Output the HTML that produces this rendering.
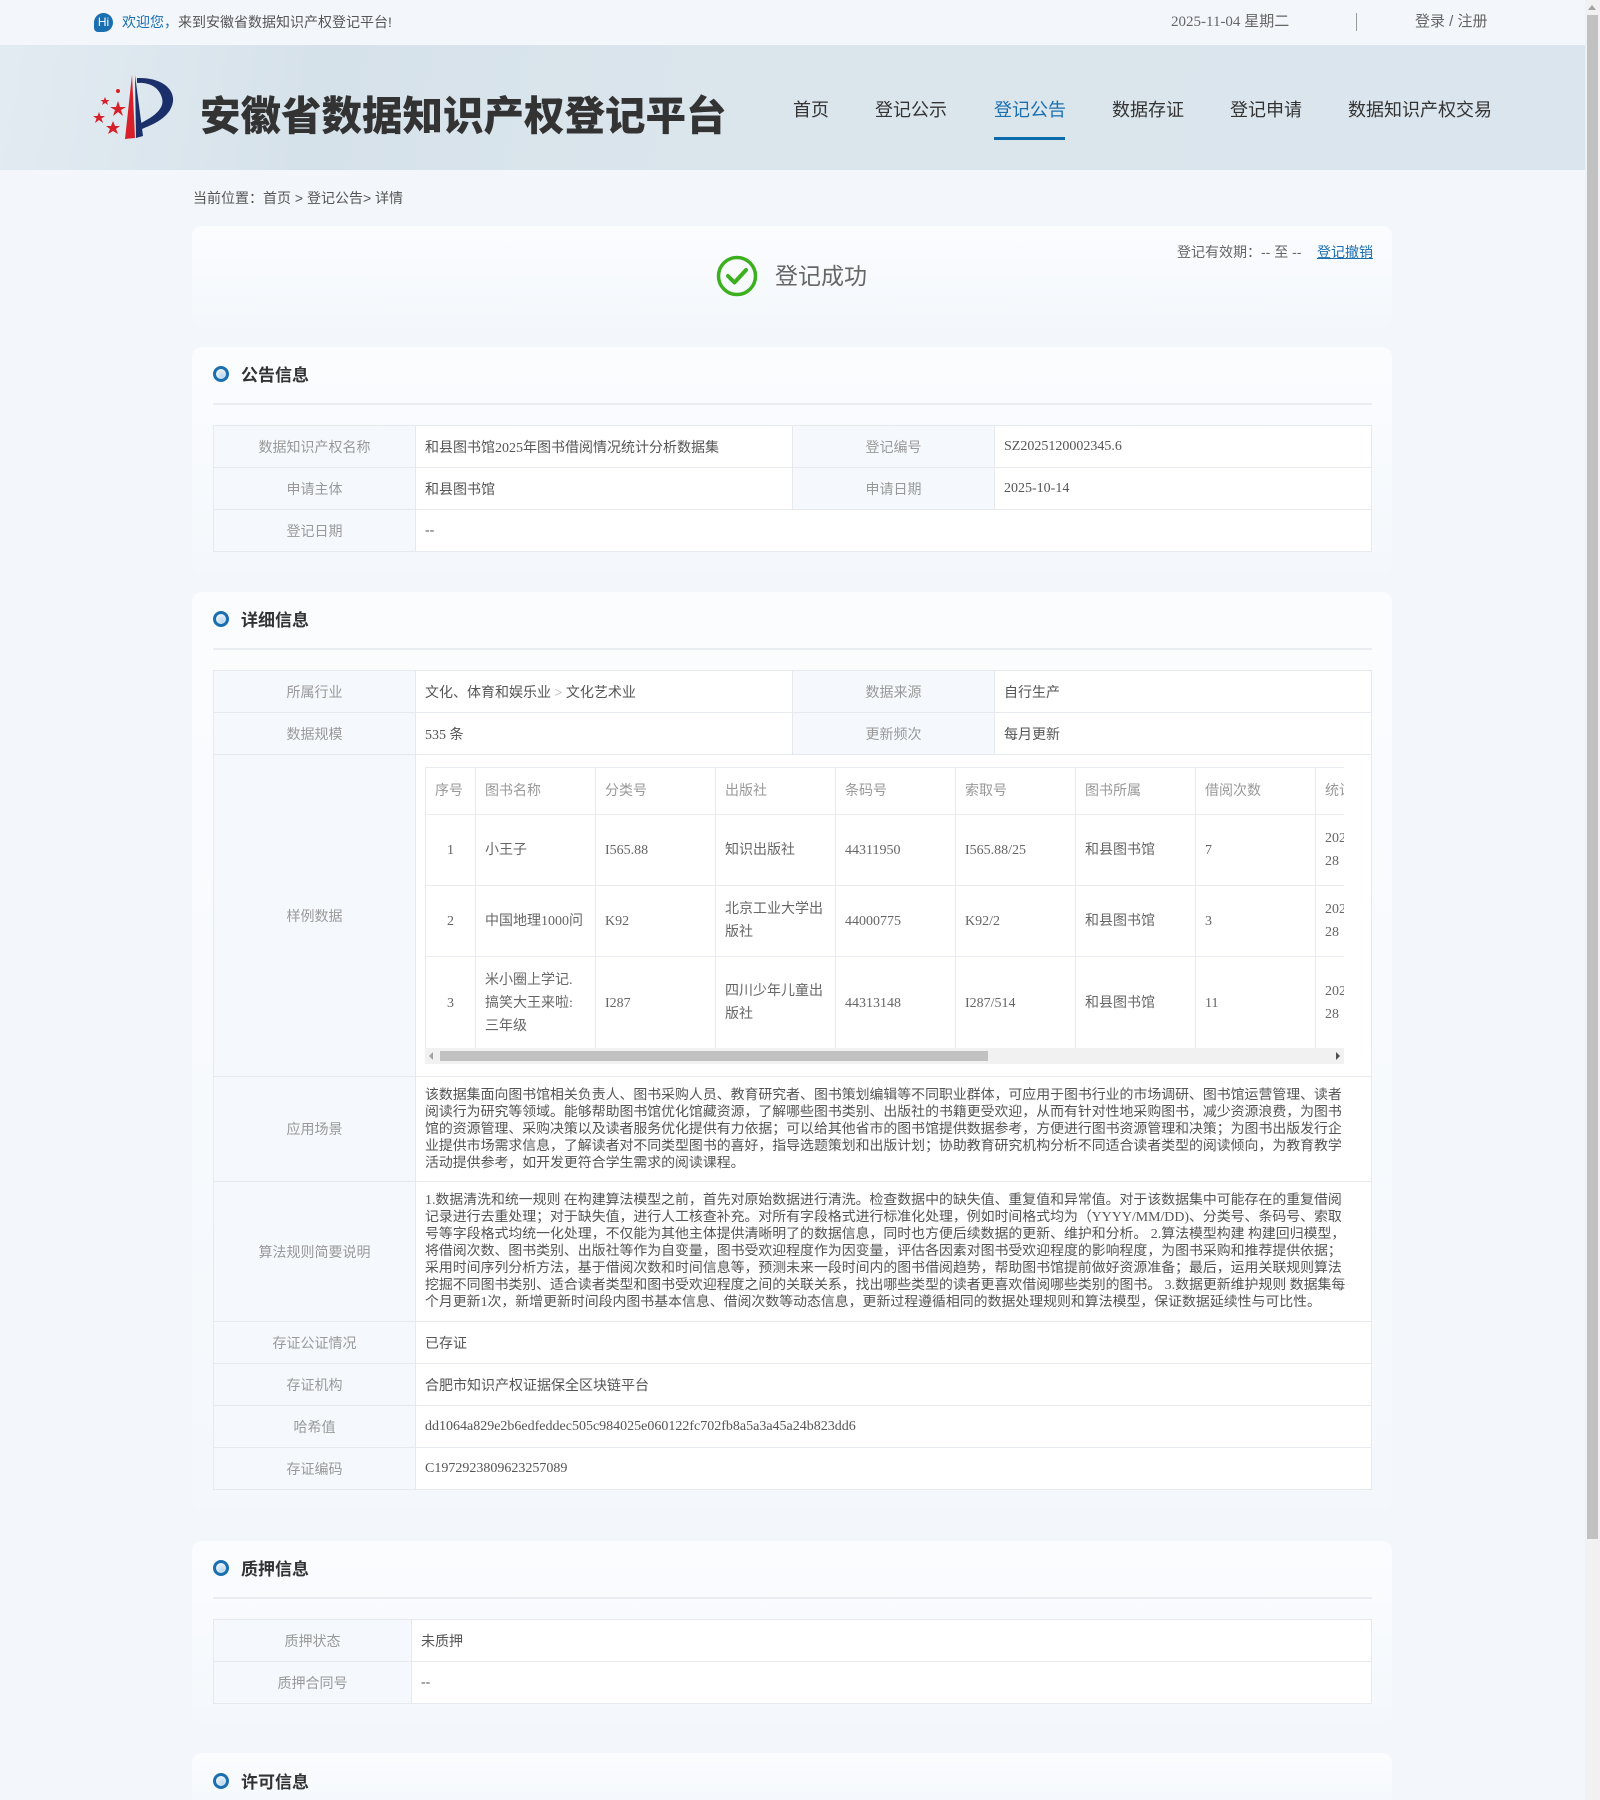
<!DOCTYPE html>
<html><head><meta charset="utf-8">
<style>
*{margin:0;padding:0;box-sizing:border-box}
html,body{width:1600px;height:1800px;overflow:hidden}
body{background:#f3f6fb;font-family:"Liberation Serif","Noto Sans CJK SC",serif;color:#555;position:relative}
.sans{font-family:"Liberation Sans","Noto Sans CJK SC",sans-serif}
.abs{position:absolute}
#top{left:0;top:0;width:1585px;height:45px;background:#f3f6fb}
#banner{left:0;top:45px;width:1585px;height:125px;background:linear-gradient(100deg,#e3ebf2 0%,#d6e2ea 20%,#dbe5ec 45%,#dae5ed 100%)}
.nav{top:97px;font-size:18px;color:#333;font-family:"Noto Sans CJK SC",sans-serif;line-height:24px;white-space:nowrap}
.card{position:absolute;left:192px;width:1200px;border-radius:10px;background:linear-gradient(180deg,#fbfcfe,#f4f8fc)}
.sec{position:absolute;left:21px;font-size:17px;font-weight:bold;color:#333;font-family:"Noto Sans CJK SC",sans-serif;line-height:22px;padding-left:28px}
.ic{position:absolute;left:0;top:3px;width:16px;height:16px;border-radius:50%;border:3px solid #1a6fb0;background:radial-gradient(circle at 65% 70%,#bcd6ee,#fff)}
.div{position:absolute;left:21px;width:1159px;height:2px;background:#e9edf2}
table{border-collapse:collapse;position:absolute;left:21px;width:1159px;table-layout:fixed}
td{border:1px solid #e6eaef;font-size:14px;height:42px;color:#555;padding:0 9px;font-family:"Liberation Serif","Noto Sans CJK SC",serif}
td.l{background:#f5f9fd;color:#999;text-align:center}
td.v{background:#fff}
.p{line-height:17px;padding:8px 22px 8px 9px;font-size:13.9px}
.st{border-collapse:collapse;table-layout:fixed;position:static;width:1050px}
.st td{height:auto;border:1px solid #e8ecf0;color:#666;font-size:14px;padding:0 9px;line-height:23px}
.st tr.h td{height:47px;color:#999}
</style></head><body>
<div id="top" class="abs"></div>
<div class="abs" style="left:94px;top:13px;width:19px;height:19px;border-radius:50% 50% 50% 4px;background:#1a6fb0;color:#fff;font:12px 'Liberation Sans',sans-serif;line-height:19px;text-align:center">Hi</div>
<div class="abs sans" style="left:122px;top:13px;font-size:14px;line-height:19px;color:#555"><span style="color:#1a6fb0">欢迎您，</span>来到安徽省数据知识产权登记平台!</div>
<div class="abs" style="left:1171px;top:12px;font-size:15px;line-height:20px;color:#666">2025-11-04 <span class="sans">星期二</span></div>
<div class="abs" style="left:1356px;top:13px;width:1px;height:18px;background:#999"></div>
<div class="abs sans" style="left:1415px;top:12px;font-size:15px;line-height:20px;color:#666">登录 / 注册</div>

<div id="banner" class="abs"></div>
<svg class="abs" style="left:85px;top:65px" width="110" height="90" viewBox="0 0 110 90">
<polygon points="47,10 40,74 50,73" fill="#d8202a"/>
<polygon points="50,10 51,73 58,71" fill="#1b2f6b"/>
<path d="M52,13 C80,12 95,28 85,45 C78,56 66,60 57,64 L56,58 C68,52 80,44 77,33 C74,22 64,17 52,18 Z" fill="#1b2f6b"/>
<g fill="#d8202a">
<polygon points="33,36 35,42 41,42 36,45 38,51 33,47 28,51 30,45 25,42 31,42"/>
<polygon points="14,47 15.5,51 20,51 16.5,53.5 18,58 14,55 10,58 11.5,53.5 8,51 12.5,51"/>
<polygon points="20,32 21.3,35 24.5,35 22,37 23,40 20,38 17,40 18,37 15.5,35 18.7,35"/>
<polygon points="28,56 30,61 35,61 31,64 33,69 28,66 23,69 25,64 21,61 26,61"/>
<circle cx="33" cy="26" r="2"/>
</g></svg>
<div class="abs" style="left:200px;top:88px;font-size:40.5px;line-height:50px;font-weight:900;color:#333;font-family:'Noto Sans CJK SC',sans-serif;white-space:nowrap">安徽省数据知识产权登记平台</div>
<div class="abs nav" style="left:793px">首页</div>
<div class="abs nav" style="left:875px">登记公示</div>
<div class="abs nav" style="left:994px;color:#1a6fb0">登记公告</div>
<div class="abs" style="left:994px;top:137px;width:71px;height:3px;background:#0a6aaa"></div>
<div class="abs nav" style="left:1112px">数据存证</div>
<div class="abs nav" style="left:1230px">登记申请</div>
<div class="abs nav" style="left:1348px">数据知识产权交易</div>

<div class="abs sans" style="left:193px;top:188px;font-size:14px;line-height:20px;color:#555">当前位置：首页 &gt; 登记公告&gt; 详情</div>

<div class="card" style="top:226px;height:101px">
  <svg class="abs" style="left:524px;top:29px" width="42" height="42" viewBox="0 0 42 42"><circle cx="21" cy="21" r="18.5" fill="none" stroke="#3cb01f" stroke-width="3.5"/><path d="M12 21 L18.5 27.5 L30 15" fill="none" stroke="#3cb01f" stroke-width="4" stroke-linecap="round" stroke-linejoin="round"/></svg>
  <div class="abs sans" style="left:583px;top:35px;font-size:23px;line-height:30px;color:#666">登记成功</div>
  <div class="abs sans" style="left:985px;top:16px;font-size:14px;line-height:20px;color:#666">登记有效期：-- 至 --</div>
  <div class="abs sans" style="left:1125px;top:16px;font-size:14px;line-height:20px;color:#1a6fb0;text-decoration:underline">登记撤销</div>
</div>

<div class="card" style="top:347px;height:227px">
  <div class="sec" style="top:16px"><span class="ic"></span>公告信息</div>
  <div class="div" style="top:56px"></div>
  <table style="top:78px">
    <colgroup><col style="width:202px"><col style="width:377px"><col style="width:202px"><col></colgroup>
    <tr><td class="l">数据知识产权名称</td><td class="v">和县图书馆2025年图书借阅情况统计分析数据集</td><td class="l">登记编号</td><td class="v">SZ2025120002345.6</td></tr>
    <tr><td class="l">申请主体</td><td class="v">和县图书馆</td><td class="l">申请日期</td><td class="v">2025-10-14</td></tr>
    <tr><td class="l">登记日期</td><td class="v" colspan="3">--</td></tr>
  </table>
</div>

<div class="card" style="top:592px;height:918px">
  <div class="sec" style="top:16px"><span class="ic"></span>详细信息</div>
  <div class="div" style="top:56px"></div>
  <table style="top:78px">
    <colgroup><col style="width:202px"><col style="width:377px"><col style="width:202px"><col></colgroup>
    <tr><td class="l">所属行业</td><td class="v">文化、体育和娱乐业 <span style="color:#aaa">&gt;</span> 文化艺术业</td><td class="l">数据来源</td><td class="v">自行生产</td></tr>
    <tr><td class="l">数据规模</td><td class="v">535 条</td><td class="l">更新频次</td><td class="v">每月更新</td></tr>
    <tr><td class="l" style="height:322px">样例数据</td><td class="v" colspan="3" style="padding:12px 9px 12px 9px;vertical-align:top">
      <div style="width:919px;height:297px;overflow:hidden;position:relative">
      <table class="st">
        <colgroup><col style="width:50px"><col style="width:120px"><col style="width:120px"><col style="width:120px"><col style="width:120px"><col style="width:120px"><col style="width:120px"><col style="width:120px"><col style="width:160px"></colgroup>
        <tr class="h"><td>序号</td><td>图书名称</td><td>分类号</td><td>出版社</td><td>条码号</td><td>索取号</td><td>图书所属</td><td>借阅次数</td><td>统计</td></tr>
        <tr style="height:71px"><td style="text-align:center">1</td><td>小王子</td><td>I565.88</td><td>知识出版社</td><td>44311950</td><td>I565.88/25</td><td>和县图书馆</td><td>7</td><td>2025-10-<br>28</td></tr>
        <tr style="height:71px"><td style="text-align:center">2</td><td>中国地理1000问</td><td>K92</td><td>北京工业大学出版社</td><td>44000775</td><td>K92/2</td><td>和县图书馆</td><td>3</td><td>2025-10-<br>28</td></tr>
        <tr style="height:93px"><td style="text-align:center">3</td><td>米小圈上学记.搞笑大王来啦:三年级</td><td>I287</td><td>四川少年儿童出版社</td><td>44313148</td><td>I287/514</td><td>和县图书馆</td><td>11</td><td>2025-10-<br>28</td></tr>
      </table>
      <div style="position:absolute;left:0;top:281px;width:919px;height:16px;background:#f1f1f1"></div>
      <div style="position:absolute;left:15px;top:284px;width:548px;height:10px;background:#c1c1c1"></div>
      <div style="position:absolute;left:4px;top:285px;width:0;height:0;border:4px solid transparent;border-right-color:#a3a3a3;border-left:0"></div>
      <div style="position:absolute;left:911px;top:285px;width:0;height:0;border:4px solid transparent;border-left-color:#505050;border-right:0"></div>
      </div>
    </td></tr>
    <tr><td class="l" style="height:105px">应用场景</td><td class="v p" colspan="3">该数据集面向图书馆相关负责人、图书采购人员、教育研究者、图书策划编辑等不同职业群体，可应用于图书行业的市场调研、图书馆运营管理、读者阅读行为研究等领域。能够帮助图书馆优化馆藏资源，了解哪些图书类别、出版社的书籍更受欢迎，从而有针对性地采购图书，减少资源浪费，为图书馆的资源管理、采购决策以及读者服务优化提供有力依据；可以给其他省市的图书馆提供数据参考，方便进行图书资源管理和决策；为图书出版发行企业提供市场需求信息，了解读者对不同类型图书的喜好，指导选题策划和出版计划；协助教育研究机构分析不同适合读者类型的阅读倾向，为教育教学活动提供参考，如开发更符合学生需求的阅读课程。</td></tr>
    <tr><td class="l" style="height:140px">算法规则简要说明</td><td class="v p" colspan="3">1.数据清洗和统一规则 在构建算法模型之前，首先对原始数据进行清洗。检查数据中的缺失值、重复值和异常值。对于该数据集中可能存在的重复借阅记录进行去重处理；对于缺失值，进行人工核查补充。对所有字段格式进行标准化处理，例如时间格式均为（YYYY/MM/DD)、分类号、条码号、索取号等字段格式均统一化处理，不仅能为其他主体提供清晰明了的数据信息，同时也方便后续数据的更新、维护和分析。 2.算法模型构建 构建回归模型，将借阅次数、图书类别、出版社等作为自变量，图书受欢迎程度作为因变量，评估各因素对图书受欢迎程度的影响程度，为图书采购和推荐提供依据；采用时间序列分析方法，基于借阅次数和时间信息等，预测未来一段时间内的图书借阅趋势，帮助图书馆提前做好资源准备；最后，运用关联规则算法挖掘不同图书类别、适合读者类型和图书受欢迎程度之间的关联关系，找出哪些类型的读者更喜欢借阅哪些类别的图书。 3.数据更新维护规则 数据集每个月更新1次，新增更新时间段内图书基本信息、借阅次数等动态信息，更新过程遵循相同的数据处理规则和算法模型，保证数据延续性与可比性。</td></tr>
    <tr><td class="l">存证公证情况</td><td class="v" colspan="3">已存证</td></tr>
    <tr><td class="l">存证机构</td><td class="v" colspan="3">合肥市知识产权证据保全区块链平台</td></tr>
    <tr><td class="l">哈希值</td><td class="v" colspan="3">dd1064a829e2b6edfeddec505c984025e060122fc702fb8a5a3a45a24b823dd6</td></tr>
    <tr><td class="l">存证编码</td><td class="v" colspan="3">C1972923809623257089</td></tr>
  </table>
</div>

<div class="card" style="top:1541px;height:182px">
  <div class="sec" style="top:16px"><span class="ic"></span>质押信息</div>
  <div class="div" style="top:56px"></div>
  <table style="top:78px">
    <colgroup><col style="width:198px"><col></colgroup>
    <tr><td class="l">质押状态</td><td class="v">未质押</td></tr>
    <tr><td class="l">质押合同号</td><td class="v">--</td></tr>
  </table>
</div>

<div class="card" style="top:1753px;height:60px">
  <div class="sec" style="top:17px"><span class="ic"></span>许可信息</div>
</div>

<div class="abs" style="left:1585px;top:0;width:15px;height:1800px;background:#f1f1f1"></div>
<div class="abs" style="left:1587px;top:15px;width:11px;height:1524px;background:#c1c1c1"></div>
<div class="abs" style="left:1588px;top:5px;width:0;height:0;border-left:4px solid transparent;border-right:4px solid transparent;border-bottom:5px solid #a3a3a3"></div>
</body></html>
